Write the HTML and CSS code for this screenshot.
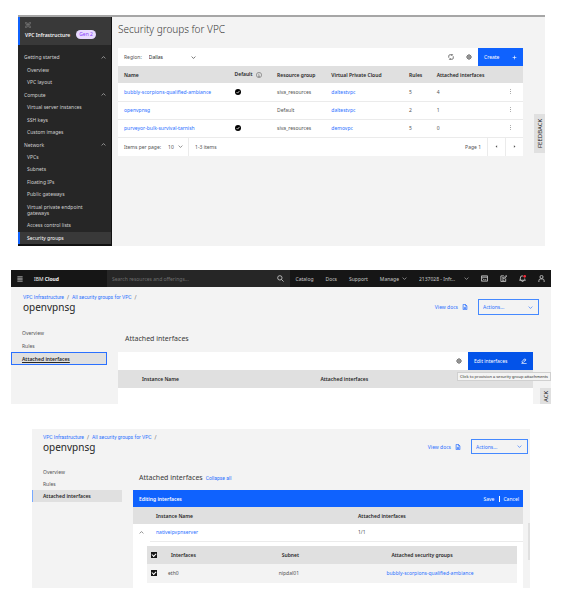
FILE: index.html
```html
<!DOCTYPE html>
<html lang="en">
<head>
<meta charset="utf-8">
<title>Security groups for VPC</title>
<meta name="viewport" content="width=device-width, initial-scale=1">
<link rel="stylesheet" href="styles.css">
</head>
<body>
<svg class="sprite" aria-hidden="true">
  <symbol id="chevron-down" viewBox="0 0 16 16"><path d="M2 5l6 6 6-6"/></symbol>
  <symbol id="chevron-up" viewBox="0 0 16 16"><path d="M2 11l6-6 6 6"/></symbol>
  <symbol id="caret-left" viewBox="0 0 16 16"><path class="fill" d="M10 4v8L5 8z"/></symbol>
  <symbol id="caret-right" viewBox="0 0 16 16"><path class="fill" d="M6 4v8l5-4z"/></symbol>
  <symbol id="vpc" viewBox="0 0 16 16"><path d="M1 6V1h5M10 1h5v5M15 10v5h-5M6 15H1v-5"/><path class="fill" d="M4 4h3v3H4zM9 4h3v3H9zM4 9h3v3H4zM9 9h3v3H9z"/></symbol>
  <symbol id="info" viewBox="0 0 16 16"><circle cx="8" cy="8" r="7"/><path d="M8 7v5M6 12h4M6.500 7H8M8 4v1"/></symbol>
  <symbol id="check" viewBox="0 0 16 16"><circle class="fill" cx="8" cy="8" r="8"/><path class="tick" d="M4 8l3 3 5-6"/></symbol>
  <symbol id="refresh" viewBox="0 0 16 16"><path d="M2 10V5a3 3 0 0 1 3-3h7M9 0l3 2-3 3M14 6v5a3 3 0 0 1-3 3H4M7 11l-3 3 3 2"/></symbol>
  <symbol id="gear" viewBox="0 0 16 16"><circle cx="8" cy="8" r="5"/><circle cx="8" cy="8" r="2"/><path d="M8 0v3M8 13v3M0 8h3M13 8h3M2.500 2.500l2 2M11.500 11.500l2 2M2.500 13.500l2-2M11.500 4.500l2-2"/></symbol>
  <symbol id="plus" viewBox="0 0 16 16"><path d="M8 2v12M2 8h12"/></symbol>
  <symbol id="dots" viewBox="0 0 16 16"><circle class="fill" cx="8" cy="2" r="1.500"/><circle class="fill" cx="8" cy="8" r="1.500"/><circle class="fill" cx="8" cy="14" r="1.500"/></symbol>
  <symbol id="menu" viewBox="0 0 16 16"><path d="M1 2h14M1 6h14M1 10h14M1 14h14"/></symbol>
  <symbol id="search" viewBox="0 0 16 16"><circle cx="6.500" cy="6.500" r="5"/><path d="M10 10l5 5"/></symbol>
  <symbol id="terminal" viewBox="0 0 16 16"><path d="M1 2h14v12H1zM1 5h14M4 8l2 2-2 2M8 11h4"/></symbol>
  <symbol id="note" viewBox="0 0 16 16"><path d="M9 2H2v13h11V8M5 6h3M5 9h2M5 12h5M14 1l1.500 1.500L10 8l-2 .500.500-2z"/></symbol>
  <symbol id="bell" viewBox="0 0 16 16"><path d="M3 12V7a5 5 0 0 1 6-5M13 8v2l2 2H1l2-2M6 12a2 2 0 0 0 4 2v-2"/><circle class="alert" cx="13" cy="3" r="3"/></symbol>
  <symbol id="user" viewBox="0 0 16 16"><circle cx="8" cy="4.500" r="3.500"/><path d="M2 16v-3a4 4 0 0 1 4-4h4a4 4 0 0 1 4 4v3"/></symbol>
  <symbol id="doc" viewBox="0 0 16 16"><path d="M3 1h6l4 4v10H3zM9 1v4h4M5 9h6M5 12h6"/></symbol>
  <symbol id="edit" viewBox="0 0 16 16"><path d="M1 15h14M3 9l7-7 3 3-7 7H3zM8 4l3 3"/></symbol>
</svg>

<main class="page">
  <section class="panel groups">
    <aside class="sidebar">
      <header class="sidebar-head">
        <svg class="icon"><use href="#vpc"/></svg>
        <div class="product">VPC Infrastructure <span class="tag">Gen 2</span></div>
      </header>
      <ul class="menu">
        <li class="heading">Getting started <svg class="icon small"><use href="#chevron-up"/></svg></li>
        <li><a href="#">Overview</a></li>
        <li><a href="#">VPC layout</a></li>
        <li class="heading">Compute <svg class="icon small"><use href="#chevron-up"/></svg></li>
        <li><a href="#">Virtual server instances</a></li>
        <li><a href="#">SSH keys</a></li>
        <li><a href="#">Custom images</a></li>
        <li class="heading">Network <svg class="icon small"><use href="#chevron-up"/></svg></li>
        <li><a href="#">VPCs</a></li>
        <li><a href="#">Subnets</a></li>
        <li><a href="#">Floating IPs</a></li>
        <li><a href="#">Public gateways</a></li>
        <li><a href="#">Virtual private endpoint<br>gateways</a></li>
        <li><a href="#">Access control lists</a></li>
        <li class="current"><a href="#">Security groups</a></li>
      </ul>
    </aside>
    <div class="groups-main">
      <h1 class="title">Security groups for VPC</h1>
      <div class="toolbar">
        <label for="region">Region:</label>
        <span class="select region"><select id="region"><option>Dallas</option></select><svg class="icon small"><use href="#chevron-down"/></svg></span>
        <span class="tools">
          <button class="plain" aria-label="Refresh"><svg class="icon"><use href="#refresh"/></svg></button>
          <button class="plain" aria-label="Settings"><svg class="icon"><use href="#gear"/></svg></button>
          <button class="primary create">Create <svg class="icon small"><use href="#plus"/></svg></button>
        </span>
      </div>
      <table class="grid groups-table">
        <colgroup><col class="c-name"><col class="c-default"><col class="c-group"><col class="c-vpc"><col class="c-rules"><col class="c-attached"><col class="c-menu"></colgroup>
        <thead>
          <tr><th>Name</th><th>Default <svg class="icon info"><use href="#info"/></svg></th><th>Resource group</th><th>Virtual Private Cloud</th><th>Rules</th><th>Attached interfaces</th><th></th></tr>
        </thead>
        <tbody>
          <tr><td><a href="#">bubbly-scorpions-qualified-ambiance</a></td><td><svg class="icon solid"><use href="#check"/></svg></td><td>siva_resources</td><td><a href="#">daltestvpc</a></td><td>5</td><td>4</td><td><button class="plain" aria-label="Row options"><svg class="icon small"><use href="#dots"/></svg></button></td></tr>
          <tr><td><a href="#">openvpnsg</a></td><td></td><td>Default</td><td><a href="#">daltestvpc</a></td><td>2</td><td>1</td><td><button class="plain" aria-label="Row options"><svg class="icon small"><use href="#dots"/></svg></button></td></tr>
          <tr><td><a href="#">purveyor-bulk-survival-tarnish</a></td><td><svg class="icon solid"><use href="#check"/></svg></td><td>siva_resources</td><td><a href="#">demovpc</a></td><td>5</td><td>0</td><td><button class="plain" aria-label="Row options"><svg class="icon small"><use href="#dots"/></svg></button></td></tr>
        </tbody>
      </table>
      <div class="pagination">
        <label for="per-page">Items per page:</label>
        <span class="select per-page"><select id="per-page"><option>10</option></select><svg class="icon small"><use href="#chevron-down"/></svg></span>
        <span class="range">1-3 items</span>
        <span class="page-no">Page 1</span>
        <button class="plain step" aria-label="Previous page"><svg class="icon small"><use href="#caret-left"/></svg></button>
        <button class="plain step" aria-label="Next page"><svg class="icon small"><use href="#caret-right"/></svg></button>
      </div>
    </div>
    <button class="feedback">FEEDBACK</button>
  </section>

  <section class="panel detail">
    <header class="topbar">
      <button class="plain burger" aria-label="Menu"><svg class="icon"><use href="#menu"/></svg></button>
      <a class="brand" href="#">IBM <b>Cloud</b></a>
      <div class="search">
        <input type="search" aria-label="Search" placeholder="Search resources and offerings...">
        <svg class="icon large"><use href="#search"/></svg>
      </div>
      <nav class="links">
        <a href="#">Catalog</a><a href="#">Docs</a><a href="#">Support</a>
        <button class="plain">Manage <svg class="icon small"><use href="#chevron-down"/></svg></button>
        <span class="select account"><select aria-label="Account"><option>2137028 - Infr...</option></select><svg class="icon small"><use href="#chevron-down"/></svg></span>
        <button class="plain" aria-label="Shell"><svg class="icon large"><use href="#terminal"/></svg></button>
        <button class="plain" aria-label="Cost estimator"><svg class="icon large"><use href="#note"/></svg></button>
        <button class="plain" aria-label="Notifications"><svg class="icon large"><use href="#bell"/></svg></button>
        <button class="plain" aria-label="Profile"><svg class="icon large"><use href="#user"/></svg></button>
      </nav>
    </header>
    <div class="resource">
      <div class="identity">
        <nav class="crumbs"><a href="#">VPC Infrastructure</a> / <a href="#">All security groups for VPC</a> /</nav>
        <h2 class="name">openvpnsg</h2>
      </div>
      <a class="docs" href="#">View docs <svg class="icon"><use href="#doc"/></svg></a>
      <span class="select actions"><select aria-label="Actions"><option>Actions...</option></select><svg class="icon small"><use href="#chevron-down"/></svg></span>
    </div>
    <div class="split">
      <nav class="tabs">
        <a href="#">Overview</a>
        <a href="#">Rules</a>
        <a class="current focused" href="#">Attached interfaces</a>
      </nav>
      <div class="content">
        <h3 class="subtitle">Attached interfaces</h3>
        <div class="toolbar">
          <span class="tools">
            <button class="plain" aria-label="Settings"><svg class="icon"><use href="#gear"/></svg></button>
            <button class="primary edit" aria-describedby="tip">Edit interfaces <svg class="icon"><use href="#edit"/></svg></button>
          </span>
          <span class="tooltip" id="tip" role="tooltip">Click to provision a security group attachments</span>
        </div>
        <table class="grid attached-table">
          <colgroup><col class="c-instance"><col></colgroup>
          <thead><tr><th>Instance Name</th><th>Attached interfaces</th></tr></thead>
        </table>
      </div>
    </div>
    <button class="feedback clipped">ACK</button>
  </section>

  <section class="panel editing">
    <div class="resource">
      <div class="identity">
        <nav class="crumbs"><a href="#">VPC Infrastructure</a> / <a href="#">All security groups for VPC</a> /</nav>
        <h2 class="name">openvpnsg</h2>
      </div>
      <a class="docs" href="#">View docs <svg class="icon"><use href="#doc"/></svg></a>
      <span class="select actions"><select aria-label="Actions"><option>Actions...</option></select><svg class="icon small"><use href="#chevron-down"/></svg></span>
    </div>
    <div class="split">
      <nav class="tabs">
        <a href="#">Overview</a>
        <a href="#">Rules</a>
        <a class="current" href="#">Attached interfaces</a>
      </nav>
      <div class="content">
        <div class="heading-row"><h3 class="subtitle">Attached interfaces</h3><a class="collapse" href="#">Collapse all</a></div>
        <div class="editor">
          <div class="edit-bar"><b>Editing interfaces</b><button class="plain">Save</button><button class="plain cancel">Cancel</button></div>
          <table class="grid instance-table">
            <colgroup><col class="c-expand"><col class="c-server"><col></colgroup>
            <thead><tr><th></th><th>Instance Name</th><th>Attached interfaces</th></tr></thead>
            <tbody><tr><td><button class="plain" aria-label="Collapse row"><svg class="icon small"><use href="#chevron-up"/></svg></button></td><td><a href="#">nativeipvpnserver</a></td><td>1/1</td></tr></tbody>
          </table>
          <div class="nested">
            <table class="grid interface-table">
              <colgroup><col class="c-check"><col class="c-iface"><col class="c-subnet"><col></colgroup>
              <thead><tr><th><input type="checkbox" aria-label="Select all interfaces" checked></th><th>Interfaces</th><th>Subnet</th><th>Attached security groups</th></tr></thead>
              <tbody><tr><td><input type="checkbox" aria-label="Select eth0" checked></td><td>eth0</td><td>nipdal01</td><td><a href="#">bubbly-scorpions-qualified-ambiance</a></td></tr></tbody>
            </table>
          </div>
        </div>
      </div>
    </div>
    <span class="scroll-thumb"></span>
  </section>
</main>
</body>
</html>
```
FILE: styles.css
```css
* { box-sizing: border-box; }

body {
  margin: 0;
  background: #fff;
  color: #525252;
  font: 5px/6px "Noto Sans", "Open Sans", sans-serif;
}

a { color: #2a70ff; text-decoration: none; }
h1, h2, h3, ul { margin: 0; padding: 0; font-weight: 400; }
button, input, select { font: inherit; color: inherit; border: 0; border-radius: 0; margin: 0; padding: 0; }

.sprite { position: absolute; width: 0; height: 0; }
.icon { width: 6px; height: 6px; flex: none; fill: none; stroke: currentColor; stroke-width: 2; }
.icon.small { width: 5px; height: 5px; }
.icon.large { width: 7px; height: 7px; }
.fill { fill: currentColor; stroke: none; }
.tick { stroke: #fff; }
.alert { fill: #fa2d3c; stroke: none; }

.plain { display: inline-flex; align-items: center; justify-content: center; gap: 3px; background: none; }
.primary { display: flex; align-items: center; justify-content: space-between; padding: 0 6px; background: #0f62fe; color: #fff; }

.select { display: inline-flex; align-items: center; color: inherit; }
.select select { flex: 1; min-width: 0; appearance: none; background: none; line-height: 8px; }

.page { padding: 15px 0 27px; }
.panel { position: relative; display: flex; background: #f3f3f3; }

/* Security group list */
.groups { min-height: 231px; margin: 0 31px 24px 18px; border-top: 2px solid #a6a6a6; }
.sidebar { display: flex; flex-direction: column; width: 94px; background: #262626; color: #d0d0d0; font-weight: 600; border-bottom: 2px solid #111; border-right: 1px solid #111; }
.sidebar-head { height: 28px; padding: 5px; background: #393939; border-left: 2px solid #0f62fe; color: #f4f4f4; }
.sidebar-head .icon { display: block; color: #a8a8a8; stroke-width: 1; }
.product { display: flex; align-items: center; gap: 6px; margin-top: 2px; white-space: nowrap; }
.tag { padding: 1px 3px; border-radius: 5px; background: #e8daff; color: #8a3ffc; font-weight: 400; line-height: 7px; }
.menu { display: flex; flex: 1; flex-direction: column; padding-top: 6px; list-style: none; }
.menu li { display: flex; flex: 1 0 12px; align-items: center; justify-content: space-between; padding: 0 5px 0 9px; }
.menu li:nth-child(13) { flex-basis: 18px; }
.menu .heading { padding-left: 6px; }
.menu a { color: inherit; white-space: nowrap; }
.menu .current { padding-left: 7px; background: #393939; border-left: 2px solid #0f62fe; color: #fff; }

.groups-main { flex: 1; min-width: 0; padding: 5px 22px 0 6px; }
.title { height: 26px; color: #393939; font-size: 10px; font-weight: 300; line-height: 15px; }
.toolbar { position: relative; display: flex; align-items: center; height: 18px; padding-left: 6px; background: #fff; }
.region { width: 47px; margin-left: 7px; color: #262626; }
.tools { display: flex; align-self: stretch; align-items: center; gap: 12px; margin-left: auto; }
.primary { align-self: stretch; }
.create { width: 45px; margin-left: -6px; }
.edit { width: 65px; margin-left: -6px; background: #0353e9; }

.grid { width: 100%; border-collapse: collapse; table-layout: fixed; background: #fff; }
.grid th, .grid td { height: 18px; padding: 0 0 0 6px; text-align: left; white-space: nowrap; }
.grid th { background: #e0e0e0; color: #262626; font-weight: 600; }
.grid td { border-bottom: 1px solid #ebebeb; }
.grid .icon { vertical-align: middle; }
.grid .info { margin-left: 2px; stroke-width: 1; }
.grid .solid { color: #000; }
.groups-table th { height: 17px; }
.groups-table td:last-child { padding-left: 4px; }
.c-name { width: 27.3%; }
.c-default { width: 10.5%; }
.c-group { width: 13.4%; }
.c-vpc { width: 19.2%; }
.c-rules { width: 6.8%; }
.c-attached { width: 18.2%; }

.pagination { display: flex; align-items: center; height: 18px; padding-left: 6px; background: #fff; }
.per-page { width: 15px; margin-left: 7px; }
.range { display: flex; align-items: center; height: 18px; margin-left: 5px; padding-left: 6px; border-left: 1px solid #ebebeb; }
.page-no { margin: 0 6px 0 auto; }
.step { width: 18px; height: 18px; border-left: 1px solid #ebebeb; }

.feedback { position: absolute; right: 0; top: 97px; width: 11px; height: 39px; background: #e0e0e0; color: #262626; font-size: 6px; writing-mode: vertical-rl; transform: rotate(180deg); }
.feedback.clipped { top: 118px; height: 16px; }

/* Resource page */
.detail { flex-direction: column; min-height: 134px; margin: 0 25px 25px 11px; }
.topbar { display: flex; align-items: center; height: 17px; margin-bottom: 1px; background: #161616; color: #c6c6c6; }
.topbar a { color: inherit; }
.burger { width: 17px; }
.topbar .brand { width: 73px; margin-left: 6px; color: #f4f4f4; }
.search { display: flex; flex: 1; align-items: center; height: 17px; padding: 0 6px 0 5px; background: #262626; }
.search input { flex: 1; min-width: 0; background: none; appearance: none; outline: 0; }
.search input::placeholder { color: #6f6f6f; }
.links { display: flex; align-items: center; gap: 12px; padding: 0 6px; white-space: nowrap; }
.account { width: 50px; }

.resource { display: flex; align-items: flex-start; height: 41px; padding: 6px 12px 0; }
.identity { flex: 1; }
.crumbs { display: flex; gap: 3px; font-family: Roboto, "Liberation Sans", sans-serif; }
.name { color: #262626; font-size: 10px; line-height: 15px; }
.docs { display: flex; align-items: center; gap: 4px; height: 15px; margin: 5px 10px 0 0; }
.actions { width: 61px; height: 16px; margin-top: 5px; padding: 0 5px 0 4px; border: 1px solid #4589ff; color: #2a70ff; }
.split { display: flex; flex: 1; }
.tabs { width: 96px; }
.tabs a { display: flex; align-items: center; height: 13px; padding-left: 11px; color: #525252; }
.tabs .current { background: #e0e0e0; color: #262626; font-weight: 600; }
.tabs .focused { border: 1px solid #2a70ff; padding-left: 10px; text-decoration: underline; }
.content { flex: 1; min-width: 0; }
.subtitle { color: #393939; font-size: 7px; line-height: 10px; }
.detail .tabs { margin-top: -3px; }
.detail .content { margin: 0 18px 0 11px; background: #fff; }
.detail .subtitle { height: 23px; padding: 5px 7px 0; background: #f3f3f3; }
.attached-table th { padding-left: 24px; }
.c-instance { width: 43%; }
.tooltip { position: absolute; z-index: 1; right: -18px; top: 20px; height: 9px; padding: 0 2px; border: 1px solid #d0d0d0; background: #f4f4f4; color: #262626; line-height: 7px; white-space: nowrap; font-size: 4px; }

/* Interface editing */
.editing { flex-direction: column; min-height: 159px; margin: 0 46px 0 32px; }
.editing .resource { height: 37px; padding: 5px 2px 0 11px; }
.editing .actions { width: 57px; height: 15px; }
.editing .tabs { width: 90px; }
.editing .tabs a { height: 12px; padding-left: 11px; }
.editing .tabs .current { padding-left: 10px; border-left: 1px solid #78a9ff; }
.editing .content { display: flex; flex-direction: column; margin: 0 7px 0 11px; }
.heading-row { display: flex; align-items: center; gap: 3px; height: 24px; padding: 0 6px; }
.collapse { font-family: Roboto, "Liberation Sans", sans-serif; }
.editor { flex: 1; background: #fff; }
.edit-bar { display: flex; align-items: center; height: 17px; padding: 0 4px 0 6px; background: #0f62fe; color: #fff; }
.edit-bar b { flex: 1; font-weight: 600; }
.edit-bar .cancel { margin-left: 5px; padding-left: 3px; border-left: 1px solid #fff; }
.instance-table th, .instance-table td { height: 17px; }
.instance-table td:first-child { border-bottom: 0; }
.c-expand { width: 17px; }
.c-server { width: 202px; }
.nested { padding: 4px 6px 0 14px; }
.interface-table th { height: 18px; }
.interface-table td { height: 19px; background: #f3f3f3; border-bottom: 0; }
.interface-table th:nth-child(3), .interface-table td:nth-child(3) { padding-right: 38px; text-align: right; }
.interface-table th:nth-child(4) { padding-right: 16px; text-align: center; }
.interface-table td:nth-child(4) { text-align: center; }
.interface-table th:nth-child(2) { padding-left: 9px; }
.c-check { width: 15px; }
.c-iface { width: 80px; }
.c-subnet { width: 95px; }
.interface-table th:first-child, .interface-table td:first-child { padding-left: 4px; }
.interface-table input { display: flex; align-items: center; justify-content: center; width: 6px; height: 6px; appearance: none; background: #161616; }
.interface-table input:checked::before { content: ""; width: 3px; height: 2px; margin-top: -1px; border: solid #fff; border-width: 0 0 1px 1px; transform: rotate(-45deg); }
.scroll-thumb { position: absolute; right: 0; top: 94px; width: 2px; height: 37px; background: #e0e0e0; }
```
